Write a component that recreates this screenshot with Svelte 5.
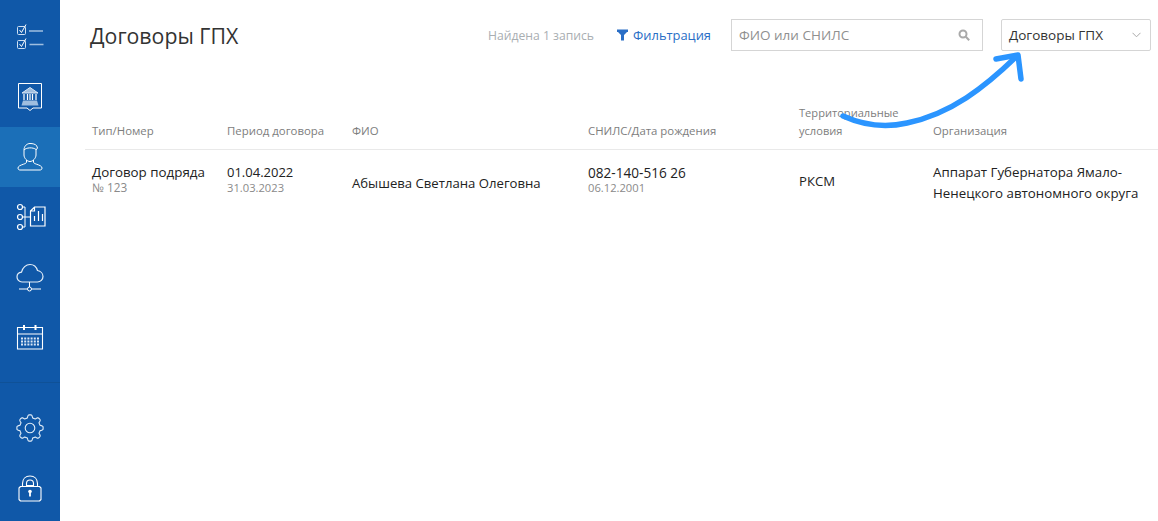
<script>
  const headers = [
    { label: 'Тип/Номер' },
    { label: 'Период договора' },
    { label: 'ФИО' },
    { label: 'СНИЛС/Дата рождения' },
    { label: 'Территориальные условия' },
    { label: 'Организация' }
  ];

  // gear outline: 8 rounded lobes around the centre of a 28×28 box
  const gear = Array.from({ length: 120 }, (_, i) => {
    const a = (i / 120) * Math.PI * 2;
    const wave = Math.max(-1, Math.min(1, Math.cos(a * 8) * 1.9));
    const r = 11.7 + wave * 1.4;
    return `${(14 + r * Math.cos(a)).toFixed(2)} ${(14 + r * Math.sin(a)).toFixed(2)}`;
  }).join('L');
</script>

<div class="page">
  <nav class="side">
    <div class="top">
      <a class="item">
        <svg width="30" height="30" viewBox="0 0 30 30" fill="none" stroke="#fff" stroke-width="1">
          <rect x="2.500" y="4.500" width="8" height="8" rx="1" stroke="#cfe0f2"/>
          <rect x="2.500" y="18.500" width="8" height="8" rx="1" stroke="#cfe0f2"/>
          <path d="M4.500 8l2 2.500 4.500-8M4.500 22l2 2.500 4.500-8"/>
          <path d="M14 9h14M14.500 22.500h14" stroke="#9fbedf" stroke-width="1.500"/>
        </svg>
      </a>
      <a class="item">
        <svg width="30" height="34" viewBox="0 0 30 34" fill="none" stroke="#fff" stroke-width="1">
          <path d="M3.500 3.500h23v24.500h-8.500l-3 2.500-3-2.500h-8.500z" stroke-linejoin="round"/>
          <path d="M7 13l8-5.500 8 5.500z" fill="#9fbedf" stroke="#dbe7f4"/>
          <path d="M9 14v6M12.500 14v6M15 14v6M17.500 14v6M21 14v6" stroke-width="1.200"/>
          <path d="M8 20.500h14l1.500 5h-17z" fill="#9fbedf" stroke="none"/>
        </svg>
      </a>
      <a class="item active">
        <svg width="30" height="30" viewBox="0 0 30 30" fill="none" stroke="#fff" stroke-width="1">
          <path d="M9 8c0-4 3-6.500 6-6.500s5 .7 6.500 2l1 2.500-1.500 2"/>
          <path d="M9 8c2-2.500 9-3 12-.5"/>
          <path d="M9 8v5c0 3 3 6.500 6 6.500s6-3.500 6-6.500v-5"/>
          <path d="M11.500 18v2c0 1-1 1.500-3 2.200-3 1-5.500 2-5.500 3.800 0 1.500 1 2 2 2h20c1 0 2-.5 2-2 0-1.800-2.500-2.800-5.500-3.800-2-.7-3-1.200-3-2.200v-2"/>
        </svg>
      </a>
      <a class="item">
        <svg width="32" height="30" viewBox="0 0 32 30" fill="none" stroke="#fff" stroke-width="1">
          <circle cx="6" cy="5" r="2.500" stroke-width="1.200"/>
          <circle cx="6" cy="15" r="2.500" stroke-width="1.200"/>
          <circle cx="6" cy="25" r="2.500" stroke-width="1.200"/>
          <path d="M8.500 5h2.500v20h-2.500M8.500 15h8"/>
          <path d="M16.500 9l4-4h10.500v19h-14.500zM16.500 9h4v-4" stroke-width="1.200"/>
          <path d="M20.500 19v-5M24.500 19v-10M28.500 19v-7" stroke-width="1.200"/>
        </svg>
      </a>
      <a class="item">
        <svg width="30" height="30" viewBox="0 0 30 30" fill="none" stroke="#fff" stroke-width="1">
          <path d="M7 20c-3 0-5-2.500-5-5s2-4.500 4.500-4.800c1-4.500 4.500-7.700 8.500-7.700 3.500 0 6.500 2.500 7.500 6 3 .5 5.500 3 5.500 6 0 3-2.500 5.500-5.500 5.500z" stroke="#e4eef8" stroke-width="1.200"/>
          <path d="M14.500 20v5M4 27h8.500M16.500 27h9.500"/>
          <circle cx="14.500" cy="27" r="2"/>
        </svg>
      </a>
      <a class="item">
        <svg width="28" height="28" viewBox="0 0 28 28" fill="none" stroke="#fff" stroke-width="1">
          <path d="M1.500 4.500h25v21.500h-25zM1.500 11h25" stroke-width="1.100"/>
          <path d="M8 2v5M19.500 2v5" stroke-width="2"/>
          <path d="M5 15.500h18M5 18.500h18M5 21.500h18" stroke-width="1.800" stroke-dasharray="2 1.200" stroke="#dbe7f4"/>
        </svg>
      </a>
    </div>
    <div class="bottom">
      <a class="item">
        <svg width="28" height="28" viewBox="0 0 28 28" fill="none" stroke="#e4eef8" stroke-width="1.100">
          <path d={`M${gear}Z`} stroke-linejoin="round"/>
          <circle cx="14" cy="14" r="4.800"/>
        </svg>
      </a>
      <a class="item">
        <svg width="26" height="28" viewBox="0 0 26 28" fill="none" stroke="#fff" stroke-width="1.100">
          <path d="M3.500 12.500h19l1.500 1.500v11.500l-1.500 1.500h-19l-1.500-1.500v-11.500z" stroke-linejoin="round"/>
          <path d="M5.500 12.500v-3c0-4.500 3-7.500 7.500-7.500s7.500 3 7.500 7.500v3"/>
          <path d="M9.500 11.500v-2c0-2.200 1.500-3.500 3.500-3.500s3.500 1.300 3.500 3.500v2z"/>
          <circle cx="13" cy="17.500" r="1.800" fill="#fff" stroke="none"/>
          <path d="M13 18v4.500" stroke-width="1.800"/>
        </svg>
      </a>
    </div>
  </nav>

  <main class="content">
    <header class="head">
      <h1>Договоры ГПХ</h1>
      <div class="tools">
        <span class="found">Найдена 1 запись</span>
        <a class="filter">
          <svg width="11" height="12" viewBox="0 0 11 12"><path d="M0 .5h11v2.500h-1l-3 3v5.500h-3v-5.500l-3-3h-1z" fill="#2a6ec6"/></svg>
          Фильтрация
        </a>
        <div class="search">
          <span>ФИО или СНИЛС</span>
          <svg width="12" height="12" viewBox="0 0 12 12" fill="none" stroke="#a9a9a9" stroke-width="2"><circle cx="5" cy="5" r="3.500"/><path d="M7.800 7.800l3.400 3.400"/></svg>
        </div>
        <div class="select">
          <span>Договоры ГПХ</span>
          <svg width="9" height="6" viewBox="0 0 9 6" fill="none" stroke="#a9a9a9"><path d="M.5.800l4 4 4-4"/></svg>
        </div>
      </div>
    </header>

    <div class="table">
      <div class="row hrow">
        {#each headers as h}
          <div class="th">{h.label}</div>
        {/each}
      </div>
      <div class="row drow">
        <div class="td kind"><div>Договор подряда</div><small>№ 123</small></div>
        <div class="td period"><div>01.04.2022</div><small>31.03.2023</small></div>
        <div class="td mid">Абышева Светлана Олеговна</div>
        <div class="td snils"><div>082-140-516 26</div><small>06.12.2001</small></div>
        <div class="td mid2">РКСМ</div>
        <div class="td org">Аппарат Губернатора Ямало-Ненецкого автономного округа</div>
      </div>
    </div>
  </main>

  <svg class="arrow" width="1158" height="521" viewBox="0 0 1158 521" fill="none" stroke="#2b95ff" stroke-width="5.500" stroke-linecap="round" stroke-linejoin="round">
    <path d="M843 116c20 9 42 12 64 7 44-9 78-36 110-67"/>
    <path d="M996 59l22-4 3 24"/>
  </svg>
</div>

<style>
  :global(body) { margin: 0; background: #fff; }
  .page {
    display: flex;
    height: 521px;
    width: 1158px;
    position: relative;
    overflow: hidden;
    font-family: "Open Sans", sans-serif;
    color: #222;
  }
  .side {
    width: 60px;
    flex: none;
    background: #1058a8;
    display: flex;
    flex-direction: column;
    justify-content: space-between;
    padding-top: 7px;
    box-sizing: border-box;
  }
  .top { display: flex; flex-direction: column; }
  .bottom {
    border-top: 1px solid #0f5197;
    padding-top: 15px;
    padding-bottom: 3px;
  }
  .item {
    height: 60px;
    display: flex;
    align-items: center;
    justify-content: center;
  }
  .item.active { background: #1b6fb8; }
  .content { flex: 1; min-width: 0; padding-left: 25px; }
  .head {
    display: flex;
    justify-content: space-between;
    align-items: center;
    height: 70px;
    padding-right: 7px;
    padding-left: 5px;
    box-sizing: border-box;
  }
  h1 {
    font-size: 21.300px;
    font-weight: 400;
    margin: 2px 0 0;
    color: #333;
    line-height: 30px;
  }
  .tools { display: flex; align-items: center; }
  .found { font-size: 12.200px; color: #a9aeb2; margin-right: 23px; }
  .filter {
    font-size: 12.900px;
    color: #2a6ec6;
    display: flex;
    align-items: center;
    gap: 5px;
    margin-right: 20px;
  }
  .search, .select {
    height: 32px;
    box-sizing: border-box;
    border: 1px solid #d5d5d5;
    display: flex;
    align-items: center;
    justify-content: space-between;
    font-size: 13.500px;
  }
  .search {
    width: 252px;
    padding: 0 12px 0 7px;
    color: #8f8f8f;
    margin-right: 18px;
  }
  .select {
    width: 150px;
    padding: 0 9px 0 7px;
    border-radius: 2px;
    color: #333;
  }
  .row {
    display: grid;
    grid-template-columns: 135px 125px 236px 211px 134px 1fr;
    padding-left: 7px;
  }
  .hrow {
    height: 80px;
    align-items: end;
    border-bottom: 1px solid #e9e9e9;
    box-sizing: border-box;
    padding-bottom: 9px;
  }
  .th { font-size: 11.400px; color: #7d7d7d; line-height: 18px; }
  .th:nth-child(5) { width: 110px; font-size: 11.100px; }
  .drow { padding-top: 14px; }
  .td { font-size: 13.150px; line-height: 17px; color: #222; }
  .td small { display: block; font-size: 11.200px; color: #8a8a8a; line-height: 15px; margin-top: -1px; }
  .kind > div { font-size: 13.350px; }
  .kind small { font-size: 11.800px; }
  .period > div { font-size: 13px; }
  .snils > div { font-size: 13.600px; }
  .mid { padding-top: 11px; }
  .mid2 { padding-top: 9px; }
  .org { font-size: 13.300px; line-height: 21px; margin-top: -2px; padding-right: 10px; }
  .arrow { position: absolute; left: 0; top: 0; pointer-events: none; }
</style>
